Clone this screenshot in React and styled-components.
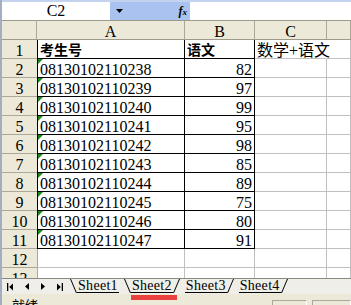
import React from 'react';
import styled, { createGlobalStyle } from 'styled-components';

const GlobalStyle = createGlobalStyle`
  html, body { margin: 0; padding: 0; background: #fff; overflow: hidden; }
  #root { width: 351px; height: 305px; }
`;

const SERIF = `"Liberation Serif", "Noto Sans CJK SC", serif`;
const CJK = `"Noto Sans CJK SC", "Liberation Sans", sans-serif`;

const Window = styled.div`
  width: 351px;
  height: 305px;
  box-sizing: border-box;
  border-left: 2px solid #a3aec2;
  display: flex;
  flex-direction: column;
  overflow: hidden;
  background: #fff;
`;

const TopStrip = styled.div`
  flex: none;
  height: 2px;
  background: #c3d3ee;
`;

const FormulaBar = styled.div`
  flex: none;
  height: 18px;
  display: flex;
  border-bottom: 1px solid #9c9a8e;
`;

const NameBox = styled.div`
  width: 108px;
  display: flex;
  align-items: center;
  justify-content: center;
  font: 16px/16px ${SERIF};
  color: #000;
`;

const DropZone = styled.div`
  width: 80px;
  box-sizing: border-box;
  background: #a9c2f0;
  display: flex;
  align-items: center;
  justify-content: space-between;
  padding: 0 3px 0 6px;
`;

const Fx = styled.span`
  font: italic bold 12px/12px ${SERIF};
  color: #000;
  & small { font-size: 9px; }
`;

const FormulaInput = styled.div`
  flex: 1;
  background: #fff;
`;

const Sheet = styled.div`
  flex: none;
  height: 257px;
  overflow: hidden;
  display: grid;
  grid-template-columns: 35px 148px 70px 72px 1fr;
  grid-auto-rows: 19px;
  background: #fff;
`;

const HeaderCell = styled.div`
  box-sizing: border-box;
  background: #ece9d8;
  border-right: 1px solid #aca899;
  border-bottom: 1px solid #9d9a8c;
  display: flex;
  align-items: flex-end;
  justify-content: center;
  font: 16px/15px ${SERIF};
  color: #000;
`;

const RowHeader = styled.div`
  box-sizing: border-box;
  background: #ece9d8;
  border-bottom: 1px solid #aca899;
  display: flex;
  align-items: flex-end;
  justify-content: center;
  font: 16px/15px ${SERIF};
  color: #000;
`;

const Cell = styled.div`
  position: relative;
  box-sizing: border-box;
  border-right: 1px solid
    ${(p) => (p.$noRight ? 'transparent' : p.$bordered ? '#000' : '#c0c0c0')};
  border-bottom: 1px solid ${(p) => (p.$bordered ? '#000' : '#c0c0c0')};
  ${(p) => p.$first && `border-left: 1px solid ${p.$bordered ? '#000' : '#aca899'};`}
  display: flex;
  align-items: flex-end;
  justify-content: ${(p) => (p.$right ? 'flex-end' : 'flex-start')};
  padding: 0 2px;
  white-space: nowrap;
  overflow: visible;
  font-family: ${SERIF};
  font-size: ${(p) => p.$size || 16}px;
  font-weight: ${(p) => (p.$bold ? 700 : 400)};
  line-height: 15px;
  color: #000;

  ${(p) =>
    p.$flag &&
    `&::before {
      content: '';
      position: absolute;
      top: 0;
      left: 0;
      width: 0;
      height: 0;
      border-top: 5px solid #1a8a1a;
      border-right: 5px solid transparent;
    }`}
`;

const TabBar = styled.div`
  flex: none;
  height: 16px;
  box-sizing: border-box;
  border-top: 1px solid #8a8880;
  background: #efeee8;
  display: flex;
  align-items: flex-start;
`;

const NavArea = styled.div`
  flex: none;
  width: 67px;
  height: 15px;
  display: grid;
  grid-template-columns: repeat(4, 16.5px);
  align-items: center;
  justify-items: center;
`;

const NavButton = styled.span`
  display: flex;
  align-items: center;
  justify-content: center;
  height: 15px;
`;

const Tabs = styled.div`
  display: flex;
  align-items: flex-start;
`;

const Tab = styled.div`
  position: relative;
  height: 14px;
  padding: 0 8px;
  display: flex;
  align-items: flex-end;
  & + & { margin-left: -4px; }

  &::before,
  &::after {
    content: '';
    position: absolute;
    top: 0;
    width: 1px;
    height: 14px;
    background: #000;
  }
  &::before {
    left: 4px;
    transform: skewX(23deg);
    display: ${(p) => (p.$left ? 'block' : 'none')};
  }
  &::after {
    right: 4px;
    transform: skewX(-23deg);
    display: ${(p) => (p.$right ? 'block' : 'none')};
  }
`;

const TabLabel = styled.span`
  padding: 0 1px;
  border-bottom: 1px solid #000;
  font: 14px/13px ${SERIF};
  letter-spacing: 0.3px;
  color: #000;
`;

const Marker = styled.span`
  position: absolute;
  left: 8px;
  top: 16px;
  width: 46px;
  height: 5px;
  background: #e8413e;
`;

const StatusBar = styled.div`
  flex: 1;
  min-height: 0;
  overflow: hidden;
  background: #ece9d8;
  display: flex;
  align-items: flex-start;
  padding-left: 10px;
`;

const StatusText = styled.span`
  margin-top: 5px;
  font: 13px/12px ${CJK};
  color: #000;
`;

const StatusPanel = styled.span`
  flex: none;
  width: ${(p) => p.$w}px;
  height: 20px;
  margin-top: 6px;
  margin-left: ${(p) => p.$gap}px;
  box-sizing: border-box;
  border-top: 1px solid #aca899;
  border-left: 1px solid #aca899;
  border-right: 1px solid #fff;
`;

const Spacer = styled.span`
  flex: 1;
`;

const FirstIcon = () => (
  <svg width="6" height="8" viewBox="0 0 6 8">
    <rect x="0" y="0" width="1.3" height="8" fill="#000" />
    <path d="M6 0.5 L2.2 4 L6 7.5Z" fill="#000" />
  </svg>
);
const PrevIcon = () => (
  <svg width="4" height="7" viewBox="0 0 4 7">
    <path d="M4 0 L0 3.5 L4 7Z" fill="#000" />
  </svg>
);
const NextIcon = () => (
  <svg width="4" height="7" viewBox="0 0 4 7">
    <path d="M0 0 L4 3.5 L0 7Z" fill="#000" />
  </svg>
);
const LastIcon = () => (
  <svg width="6" height="8" viewBox="0 0 6 8">
    <path d="M0 0.5 L3.8 4 L0 7.5Z" fill="#000" />
    <rect x="4.7" y="0" width="1.3" height="8" fill="#000" />
  </svg>
);
const DropArrow = () => (
  <svg width="7" height="4" viewBox="0 0 7 4">
    <path d="M0 0 H7 L3.5 4Z" fill="#000" />
  </svg>
);

const data = [
  ['08130102110238', 82],
  ['08130102110239', 97],
  ['08130102110240', 99],
  ['08130102110241', 95],
  ['08130102110242', 98],
  ['08130102110243', 85],
  ['08130102110244', 89],
  ['08130102110245', 75],
  ['08130102110246', 80],
  ['08130102110247', 91],
];

const sheets = [
  { name: 'Sheet1', left: true, right: false },
  { name: 'Sheet2', left: true, right: true, active: true },
  { name: 'Sheet3', left: false, right: true },
  { name: 'Sheet4', left: false, right: true },
];

export default function App() {
  return (
    <>
      <GlobalStyle />
      <Window>
        <TopStrip />
        <FormulaBar>
          <NameBox>C2</NameBox>
          <DropZone>
            <DropArrow />
            <Fx>
              f<small>x</small>
            </Fx>
          </DropZone>
          <FormulaInput />
        </FormulaBar>

        <Sheet>
          <HeaderCell />
          <HeaderCell>A</HeaderCell>
          <HeaderCell>B</HeaderCell>
          <HeaderCell>C</HeaderCell>
          <HeaderCell />

          <RowHeader>1</RowHeader>
          <Cell $first $bordered $bold $size={14}>考生号</Cell>
          <Cell $bordered $bold $size={14}>语文</Cell>
          <Cell $noRight>数学+语文</Cell>
          <Cell />

          {data.map(([id, score], i) => (
            <React.Fragment key={id}>
              <RowHeader>{i + 2}</RowHeader>
              <Cell $first $bordered $flag>{id}</Cell>
              <Cell $bordered $right>{score}</Cell>
              <Cell />
              <Cell />
            </React.Fragment>
          ))}

          {[12, 13].map((n) => (
            <React.Fragment key={n}>
              <RowHeader>{n}</RowHeader>
              <Cell $first />
              <Cell />
              <Cell />
              <Cell />
            </React.Fragment>
          ))}
        </Sheet>

        <TabBar>
          <NavArea>
            <NavButton><FirstIcon /></NavButton>
            <NavButton><PrevIcon /></NavButton>
            <NavButton><NextIcon /></NavButton>
            <NavButton><LastIcon /></NavButton>
          </NavArea>
          <Tabs>
            {sheets.map((s) => (
              <Tab key={s.name} $left={s.left} $right={s.right}>
                <TabLabel>{s.name}</TabLabel>
                {s.active && <Marker />}
              </Tab>
            ))}
          </Tabs>
        </TabBar>

        <StatusBar>
          <StatusText>就绪</StatusText>
          <Spacer />
          <StatusPanel $w={35} $gap={0} />
          <StatusPanel $w={39} $gap={5} />
        </StatusBar>
      </Window>
    </>
  );
}
